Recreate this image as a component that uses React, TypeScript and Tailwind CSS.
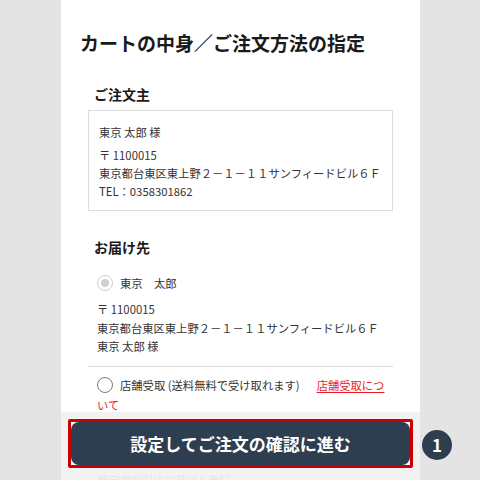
import React from 'react';

const font = "font-['Noto_Sans_CJK_JP','Noto_Sans',sans-serif]";

const Radio: React.FC<{ checked?: boolean; disabled?: boolean }> = ({ checked, disabled }) =>
  disabled ? (
    <span className="inline-flex h-[16px] w-[16px] shrink-0 items-center justify-center rounded-full border-[1.5px] border-[#cfcfcf] bg-white align-middle">
      {checked && <span className="h-[8px] w-[8px] rounded-full bg-[#cfcfcf]" />}
    </span>
  ) : (
    <span className="inline-block h-[16px] w-[16px] shrink-0 rounded-full border-[1.5px] border-[#7a7a7a] bg-white align-middle" />
  );

const App: React.FC = () => {
  return (
    <div className={`relative h-[480px] w-[480px] overflow-hidden bg-[#e4e4e4] text-[#333] ${font}`}>
      <div className="ml-[61px] flex h-full w-[359px] flex-col bg-white">
        <div className="min-h-0 flex-1 overflow-hidden">
          <h1 className="pl-[19px] pt-[29px] text-[19px] font-bold leading-[28px] text-[#1a1a1a]">
            カートの中身／ご注文方法の指定
          </h1>

          <div className="px-[27px]">
            <h2 className="mt-[27px] pl-[6px] text-[14px] font-bold leading-[20px] text-[#1a1a1a]">ご注文主</h2>
            <div className="mt-[6px] border border-[#dddddd] px-[10px] pb-[10px] pt-[12px] text-[11.3px] leading-[18px]">
              <p className="mb-[5px]">東京 太郎 様</p>
              <p>〒 1100015</p>
              <p>東京都台東区東上野２－１－１１サンフィードビル６Ｆ</p>
              <p>TEL：0358301862</p>
            </div>

            <h2 className="mt-[26px] pl-[6px] text-[14px] font-bold leading-[20px] text-[#1a1a1a]">お届け先</h2>
            <div className="pl-[9px] text-[11.3px]">
              <label className="mt-[16px] flex h-[20px] items-center gap-[7px]">
                <Radio checked disabled />
                <span>東京　太郎</span>
              </label>
              <div className="mt-[7px] leading-[18.5px]">
                <p>〒 1100015</p>
                <p>東京都台東区東上野２－１－１１サンフィードビル６Ｆ</p>
                <p>東京 太郎 様</p>
              </div>
            </div>

            <div className="mt-[10px] h-px bg-[#dddddd]" />

            <div className="mt-[8px] pl-[9px] pr-[6px] text-[11.3px] leading-[18px]">
              <Radio />
              <span className="ml-[7px] align-middle">店舗受取 (送料無料で受け取れます)</span>
              <a href="#" className="ml-[17px] align-middle text-[#ee1c25] underline underline-offset-2">
                店舗受取について
              </a>
            </div>
          </div>
        </div>

        <div className="h-[68px] shrink-0 overflow-hidden bg-[#f2f2f2] px-[7px] pt-[7px]">
          <div className="rounded-[2px] border-[3px] border-[#cc0000] bg-white">
            <button
              type="button"
              className="flex h-[43px] w-full items-center justify-center rounded-[8px] bg-[#2d3e50] text-[17px] font-bold text-white"
            >
              設定してご注文の確認に進む
            </button>
          </div>
          <p className="mt-[5px] pl-[30px] text-[11px] leading-[14px] text-[#e6e6e6]">特定商取引法に基づく表記</p>
        </div>
      </div>

      <div className="absolute left-[422px] top-[430px] flex h-[30px] w-[30px] items-center justify-center rounded-full bg-[#2d3e50] text-[17px] font-bold text-white">
        1
      </div>
    </div>
  );
};

export default App;
